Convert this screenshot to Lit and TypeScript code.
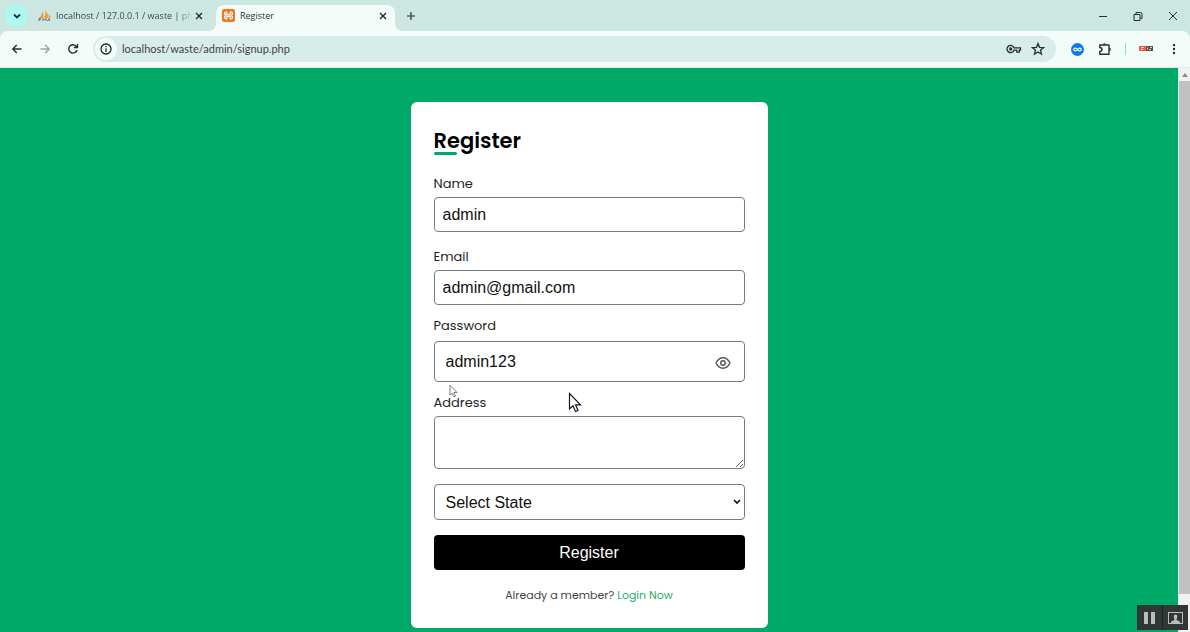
import { LitElement, html, css, svg } from "lit";
import { customElement } from "lit/decorators.js";

const stroke = (d: string, size = 12, width = 1.5) => html`
  <svg width=${size} height=${size} viewBox="0 0 12 12" fill="none" stroke="currentColor" stroke-width=${width}>
    ${svg`<path d=${d}></path>`}
  </svg>`;

@customElement("browser-chrome")
class BrowserChrome extends LitElement {
  static styles = css`
    * { box-sizing: border-box; }
    :host { display: block; flex: none; font-family: "Open Sans", "Noto Sans", sans-serif; color: #25312f; background: #cce6e2; }
    button { border: 0; padding: 0; margin: 0; background: none; color: inherit; display: flex; align-items: center; justify-content: center; flex: none; }
    svg { display: block; flex: none; }
    .strip { display: flex; height: 31px; align-items: center; }
    .search { width: 21px; height: 21px; margin: 0 0 0 6px; border-radius: 7px; background: #adf8f1; }
    .tab { display: flex; align-items: center; height: 26px; margin-top: 5px; padding-bottom: 5px; font-size: 9px; line-height: 14px; }
    .idle { width: 189px; padding-left: 11px; padding-right: 12px; color: #3f4b49; }
    .current { width: 179px; padding-left: 6px; padding-right: 6px; background: #f4fcfa; border-radius: 8px 8px 0 0; position: relative; }
    .current::before, .current::after { content: ""; position: absolute; bottom: 0; width: 8px; height: 8px; }
    .current::before { right: 100%; background: radial-gradient(circle at 0 0, #cce6e2 8px, #f4fcfa 8px); }
    .current::after { left: 100%; background: radial-gradient(circle at 100% 0, #cce6e2 8px, #f4fcfa 8px); }
    .title { flex: 1; margin-left: 5px; white-space: nowrap; }
    .fade { mask-image: linear-gradient(to right, #000 88%, transparent); }
    .close { width: 12px; height: 12px; color: #1c2624; }
    .plus { width: 32px; height: 26px; }
    .windows { margin-left: auto; display: flex; }
    .windows button { width: 35px; height: 30px; }
    .bar { display: flex; align-items: center; height: 37px; background: #f4fcfa; border-radius: 8px 8px 0 0; border-bottom: 1px solid #d9eeea; }
    .nav { display: flex; padding-left: 3px; width: 93px; }
    .nav button { width: 28px; height: 28px; }
    .off { color: #9aa6a3; }
    .pill { flex: 1; min-width: 0; display: flex; align-items: center; height: 26px; border-radius: 13px; background: #d8ecea; padding: 0 11px 0 2px; }
    .info { width: 22px; height: 22px; border-radius: 50%; background: #f4fcfa; }
    .url { flex: 1; min-width: 0; margin-left: 5px; padding: 0; border: 0; background: none; font: 11px/16px Lato, "Open Sans", sans-serif; color: #3a4644; outline: none; }
    .key { margin-right: 9px; }
    .tools { display: flex; align-items: center; padding-left: 7px; padding-right: 2px; }
    .tools button { width: 28px; height: 28px; }
    .rule { width: 1px; height: 12px; background: #7ce3db; margin: 0 6px; }
  `;

  render() {
    return html`
      <div class="strip">
        <button class="search" aria-label="Search tabs">${stroke("M3 4.5L6 7.5L9 4.5", 12, 1.8)}</button>
        <div class="tab idle">
          <svg width="13" height="12" viewBox="0 0 13 12">
            <path d="M1 8Q4 6 4.500 1Q6 5 5 8ZM5.500 8Q8 5 7.500 0Q10.500 4 10 8ZM10.500 8L11 4Q12.500 6 12.500 8Z" fill="#f39a2c"></path>
            <path d="M1 11V8.500H2.500Q3.500 9.500 1 10M5 11V8.500L6.500 10L8 8.500V11M9.500 11L11 8.500L12 11" fill="none" stroke="#6d6f91"></path>
          </svg>
          <span class="title fade">localhost / 127.0.0.1 / waste | ph</span>
          <button class="close" aria-label="Close tab">${stroke("M3 3L9 9M9 3L3 9", 12, 1.3)}</button>
        </div>
        <div class="tab current">
          <svg width="13" height="13" viewBox="0 0 13 13">
            <rect width="13" height="13" rx="2" fill="#f37623"></rect>
            <path d="M4.800 3.200H3.800Q2.600 3.200 2.600 4.400V5.200L3.600 6.500L2.600 7.800V8.600Q2.600 9.800 3.800 9.800H4.800V7.300H8.200V9.800H9.200Q10.400 9.800 10.400 8.600V7.800L9.400 6.500L10.400 5.200V4.400Q10.400 3.200 9.200 3.200H8.200V5.700H4.800Z" fill="none" stroke="#fff" stroke-width="1.200" stroke-linejoin="round"></path>
          </svg>
          <span class="title">Register</span>
          <button class="close" aria-label="Close tab">${stroke("M3 3L9 9M9 3L3 9", 12, 1.3)}</button>
        </div>
        <button class="plus" aria-label="New tab">${stroke("M6 2V10M2 6H10", 12, 1.2)}</button>
        <div class="windows">
          <button aria-label="Minimize">${stroke("M2 6.500H10", 12, 1)}</button>
          <button aria-label="Restore">${stroke("M2 4.500H8V10.500H2ZM4 4V2.500H8.500Q10 2.500 10 4V8.500H8.500", 12, 1)}</button>
          <button aria-label="Close window">${stroke("M2 2L10 10M10 2L2 10", 12, 1)}</button>
        </div>
      </div>
      <div class="bar">
        <div class="nav">
          <button aria-label="Back">${stroke("M10.500 6H2M5.800 2L1.800 6L5.800 10", 12, 1.4)}</button>
          <button class="off" aria-label="Forward">${stroke("M1.500 6H10M6.200 2L10.200 6L6.200 10", 12, 1.4)}</button>
          <button aria-label="Reload">${stroke("M10 7A4.200 4.200 0 1 1 9 3L10.300 4.300M10.500 1V4.500H7", 12, 1.4)}</button>
        </div>
        <div class="pill">
          <button class="info" aria-label="Site information">
            <svg width="12" height="12" viewBox="0 0 12 12" fill="none" stroke="#1c2624" stroke-width="1.300"><circle cx="6" cy="6" r="5"></circle><path d="M6 5.200V9M6 3V4.300"></path></svg>
          </button>
          <input class="url" aria-label="Address" .value=${"localhost/waste/admin/signup.php"} />
          <button class="key" aria-label="Passwords">
            <svg width="16" height="12" viewBox="0 0 16 12" fill="none" stroke="currentColor" stroke-width="1.300"><path d="M8 4.800H14.500V7.200H13.300V9.200H10.800V7.200H8A3.600 3.600 0 1 1 8 4.800Z"></path><circle cx="4.700" cy="6" r="1"></circle></svg>
          </button>
          <button aria-label="Bookmark">
            <svg width="14" height="14" viewBox="0 0 14 14" fill="none" stroke="currentColor" stroke-width="1.300"><path d="M7 1.500L8.500 5.300L12.600 5.600L9.500 8.200L10.500 12.200L7 10L3.500 12.200L4.500 8.200L1.400 5.600L5.500 5.300Z"></path></svg>
          </button>
        </div>
        <div class="tools">
          <button aria-label="Link extension">
            <svg width="13" height="13" viewBox="0 0 13 13"><circle cx="6.500" cy="6.500" r="6.500" fill="#0b78f5"></circle><path d="M6.500 6.500C5.500 4.800 2.800 4.500 2.800 6.500S5.500 8.200 6.500 6.500S10.200 4.500 10.200 6.500S7.500 8.200 6.500 6.500" fill="none" stroke="#fff" stroke-width="1.200"></path></svg>
          </button>
          <button aria-label="Extensions">
            <svg width="14" height="14" viewBox="0 0 14 14"><path d="M1.800 3H11V12.300H1.800V9.500Q4 9.300 4 7.500T1.800 5.500Z" fill="none" stroke="currentColor" stroke-width="1.400" stroke-linejoin="round"></path><path d="M4.800 2.800A1.600 1.600 0 0 1 8 2.800ZM11.200 5.800A1.600 1.600 0 0 1 11.200 9Z" fill="currentColor"></path></svg>
          </button>
          <span class="rule"></span>
          <button aria-label="Recorder">
            <svg width="14" height="6" viewBox="0 0 14 6"><rect width="8" height="5" fill="#ee5b43"></rect><rect x="7" width="7" height="5" fill="#50504e"></rect><path d="M2 1.500H5M2 3.500H4M8.500 1.500V3.500M10 3.500H12M11 1.500H13" stroke="#f6c9c0"></path></svg>
          </button>
          <button aria-label="Menu">
            <svg width="12" height="12" viewBox="0 0 12 12" fill="currentColor"><circle cx="6" cy="2" r="1.200"></circle><circle cx="6" cy="6" r="1.200"></circle><circle cx="6" cy="10" r="1.200"></circle></svg>
          </button>
        </div>
      </div>`;
  }
}

@customElement("register-form")
class RegisterForm extends LitElement {
  static styles = css`
    * { box-sizing: border-box; }
    :host { display: block; width: 100%; max-width: 357px; color: #1e1e1e; font-family: Poppins, Inter, sans-serif; }
    .card { display: flex; flex-direction: column; padding: 23px; border-radius: 6px; background: #fff; }
    h1 { margin: 0 0 17px; font-size: 21px; line-height: 32px; font-weight: 600; color: #000; position: relative; }
    h1::after { content: ""; position: absolute; left: 0; bottom: 2px; width: 23px; height: 3px; border-radius: 2px; background: #00a968; }
    label { font-size: 13px; line-height: 20px; margin-bottom: 3px; }
    .field { display: flex; flex-direction: column; margin-bottom: 15px; }
    .tight { margin-bottom: 11px; }
    .box { width: 100%; margin: 0; border: 1px solid #717d7e; border-radius: 4px; background: #fff; color: #111; font: 16px/20px "Liberation Sans", Arial, sans-serif; outline: none; }
    .line { height: 35px; padding: 0 8px; }
    .secret { display: flex; align-items: center; height: 41px; margin-top: 2px; padding: 0 13px 0 11px; }
    .secret input { flex: 1; min-width: 0; border: 0; padding: 0; background: none; font: inherit; color: inherit; outline: none; }
    .eye { border: 0; padding: 0; background: none; color: #555; display: flex; margin-top: 3px; }
    textarea.box { display: block; height: 53px; padding: 8px; }
    .pick { display: grid; align-items: center; margin-bottom: 15px; }
    .pick > * { grid-area: 1 / 1; }
    .pick svg { justify-self: end; margin-right: 4px; pointer-events: none; }
    select.box { appearance: none; height: 36px; padding: 2px 20px 0 11px; }
    .submit { height: 35px; border: 0; border-radius: 4px; background: #000; color: #fff; font: 16px/20px "Liberation Sans", Arial, sans-serif; }
    p { margin: 15px 0 0; font-size: 11px; line-height: 20px; text-align: center; color: #444; }
    a { color: #27ae6b; text-decoration: none; }
  `;

  render() {
    return html`
      <form class="card" @submit=${(e: Event) => e.preventDefault()}>
        <h1>Register</h1>
        <div class="field"><label for="name">Name</label><input class="box line" id="name" type="text" .value=${"admin"} /></div>
        <div class="field tight"><label for="email">Email</label><input class="box line" id="email" type="email" .value=${"admin@gmail.com"} /></div>
        <div class="field tight">
          <label for="password">Password</label>
          <div class="box secret">
            <input id="password" type="text" .value=${"admin123"} />
            <button class="eye" type="button" aria-label="Hide password">
              <svg width="16" height="14" viewBox="0 0 16 14" fill="none" stroke="currentColor" stroke-width="1.400"><path d="M1 7Q3.500 1.800 8 1.800T15 7Q12.500 12.200 8 12.200T1 7Z"></path><circle cx="8" cy="7" r="2.300"></circle></svg>
            </button>
          </div>
        </div>
        <div class="field"><label for="address">Address</label><textarea class="box" id="address"></textarea></div>
        <div class="pick">
          <select class="box" aria-label="State"><option>Select State</option></select>
          <svg width="8" height="6" viewBox="0 0 8 6" fill="none" stroke="#111" stroke-width="1.700"><path d="M1 1L4 4L7 1"></path></svg>
        </div>
        <button class="submit" type="submit">Register</button>
        <p>Already a member? <a href="#login">Login Now</a></p>
      </form>`;
  }
}

@customElement("app-root")
class AppRoot extends LitElement {
  static styles = css`
    * { box-sizing: border-box; }
    :host { display: flex; flex-direction: column; height: 100vh; overflow: hidden; position: relative; }
    .view { display: flex; flex: 1; min-height: 0; background: #00a968; }
    main { flex: 1; display: flex; justify-content: center; align-items: flex-start; padding-top: 34px; overflow: hidden; }
    .scroll { width: 12px; display: flex; flex-direction: column; align-items: center; background: #f1f1f1; border-left: 1px solid #d5ece2; }
    .up { height: 13px; display: flex; align-items: center; }
    .thumb { width: 100%; flex: 1; background: #c1c1c1; margin-bottom: 38px; }
    .recorder { position: absolute; right: 2px; bottom: 2px; display: flex; gap: 1px; background: #1d2422; }
    .recorder button { width: 25px; height: 25px; padding: 0; border: 0; background: #303735; display: flex; align-items: center; justify-content: center; }
    .pointer { position: absolute; }
    .big { left: 568px; top: 392px; }
    .small { left: 449px; top: 384px; }
  `;

  pointer(cls: string, w: number, h: number, color: string) {
    return html`<svg class="pointer ${cls}" width=${w} height=${h} viewBox="0 0 14 21" fill="#fff" stroke=${color} stroke-width="1.200"><path d="M1.500 1.500V17L5 13.800L7.500 19.500L10 18.400L7.600 12.800H12.500Z"></path></svg>`;
  }

  render() {
    return html`
      <browser-chrome></browser-chrome>
      <div class="view">
        <main><register-form></register-form></main>
        <div class="scroll">
          <div class="up"><svg width="6" height="4" viewBox="0 0 6 4"><path d="M0 4L3 0L6 4Z" fill="#8b8b8b"></path></svg></div>
          <div class="thumb"></div>
        </div>
      </div>
      ${this.pointer("big", 14, 21, "#14142b")}
      ${this.pointer("small", 9, 14, "#555")}
      <div class="recorder">
        <button aria-label="Pause"><svg width="11" height="12" viewBox="0 0 11 12" fill="#b9bdbb"><path d="M0 0H4V12H0ZM7 0H11V12H7Z"></path></svg></button>
        <button aria-label="Capture"><svg width="15" height="12" viewBox="0 0 15 12"><rect x=".5" y=".5" width="14" height="11" fill="none" stroke="#b9bdbb"></rect><path d="M3 11V9.500L6.500 8L5.800 5V3.500Q7.500 1.500 9.200 3.500V5L8.500 8L12 9.500V11Z" fill="#b9bdbb"></path></svg></button>
      </div>`;
  }
}
